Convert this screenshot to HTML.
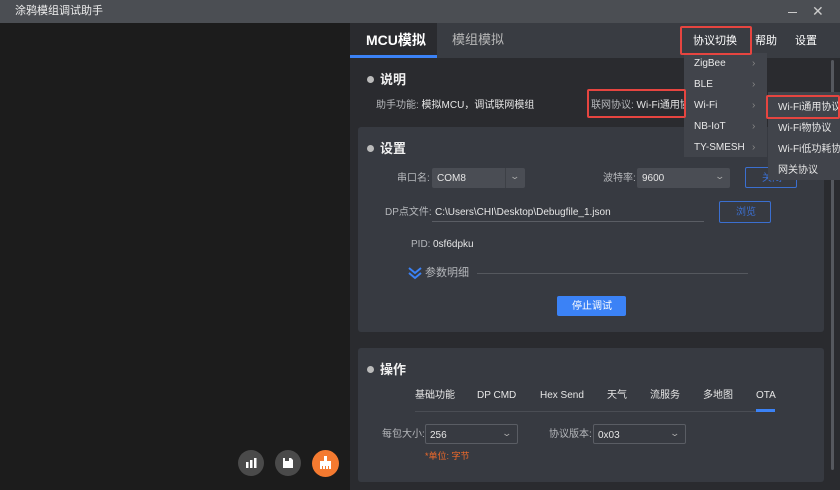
<!DOCTYPE html>
<html><head><meta charset="utf-8"><style>
*{margin:0;padding:0;box-sizing:border-box}
body{width:840px;height:490px;overflow:hidden;background:#1c1c1c;font-family:"Liberation Sans","Noto Sans CJK SC",sans-serif;color:#e6e6e6;font-size:10px;position:relative;line-height:1.5}
.a{position:absolute}
.t{white-space:nowrap}
.dot{width:7px;height:7px;border-radius:50%;background:#bbb}
.h{font-size:13px;font-weight:bold;color:#f0f0f0}
.lbl{color:#b5b7bb}
.sel{background:#4a4d54;height:20px;border-radius:2px}
.sel2{border:1px solid #5a5d64;height:20px;border-radius:2px}
.car{position:absolute;right:6px;top:2px;color:#aaa;font-size:9px;transform:scaleX(1.4)}
.mi{position:absolute;left:10px;font-size:10px;color:#e8e8e8}
.red{position:absolute;border:2px solid #e64540;border-radius:2px}
</style></head><body>
<div class="a" style="left:0;top:0;width:840px;height:23px;background:#4b4e53"></div>
<div class="a t" style="left:15px;top:3px;font-size:11px;color:#eee">涂鸦模组调试助手</div>
<div class="a" style="left:788px;top:12px;width:9px;height:1px;background:#ccc"></div>
<div class="a t" style="left:812px;top:1px;font-size:14px;color:#ccc">✕</div>

<div class="a" style="left:350px;top:23px;width:490px;height:467px;background:#2a2b2f"></div>
<div class="a" style="left:350px;top:23px;width:490px;height:35px;background:#393c42"></div>
<div class="a" style="left:350px;top:23px;width:87px;height:35px;background:#2a2b2f"></div>
<div class="a" style="left:350px;top:55px;width:87px;height:3px;background:#3b82f6"></div>
<div class="a t" style="left:366px;top:30px;font-size:14px;font-weight:bold;color:#fff">MCU模拟</div>
<div class="a t" style="left:452px;top:30px;font-size:13px;color:#b8b8b8">模组模拟</div>
<div class="a t" style="left:693px;top:33px;font-size:11px;color:#fff">协议切换</div>
<div class="a t" style="left:755px;top:33px;font-size:11px;color:#fff">帮助</div>
<div class="a t" style="left:795px;top:33px;font-size:11px;color:#fff">设置</div>
<div class="a" style="left:831px;top:60px;width:3px;height:410px;background:#55585e;border-radius:2px"></div>

<div class="a dot" style="left:367px;top:76px"></div>
<div class="a t h" style="left:380px;top:70px">说明</div>
<div class="a t" style="left:376px;top:98px"><span class="lbl">助手功能:</span> 模拟MCU，调试联网模组</div>
<div class="a t" style="left:591px;top:98px"><span class="lbl">联网协议:</span> Wi-Fi通用协议 <span style="color:#3b6fd0">使用说明</span></div>

<div class="a" style="left:358px;top:127px;width:466px;height:205px;background:#373a41;border-radius:3px"></div>
<div class="a dot" style="left:367px;top:145px"></div>
<div class="a t h" style="left:380px;top:139px">设置</div>
<div class="a t lbl" style="left:397px;top:171px">串口名:</div>
<div class="a sel" style="left:432px;top:168px;width:93px"><span class="a t" style="left:5px;top:3px">COM8</span><span class="a" style="left:73px;top:0;width:1px;height:20px;background:#3d4046"></span><span class="car">⌄</span></div>
<div class="a t lbl" style="left:603px;top:171px">波特率:</div>
<div class="a sel" style="left:637px;top:168px;width:93px"><span class="a t" style="left:5px;top:3px">9600</span><span class="car">⌄</span></div>
<div class="a" style="left:745px;top:167px;width:52px;height:21px;border:1px solid #3b6fd0;border-radius:2px"></div>
<div class="a t" style="left:762px;top:171px;color:#3b6fd0">关闭</div>
<div class="a t lbl" style="left:385px;top:205px">DP点文件:</div>
<div class="a t" style="left:435px;top:205px">C:\Users\CHI\Desktop\Debugfile_1.json</div>
<div class="a" style="left:432px;top:221px;width:272px;height:1px;background:#5a5d64"></div>
<div class="a" style="left:719px;top:201px;width:52px;height:22px;border:1px solid #3b6fd0;border-radius:2px"></div>
<div class="a t" style="left:736px;top:205px;color:#3b6fd0">浏览</div>
<div class="a t lbl" style="left:411px;top:237px">PID:</div>
<div class="a t" style="left:433px;top:237px">0sf6dpku</div>
<svg class="a" style="left:408px;top:267px" width="14" height="13"><path d="M1 1l6 5 6-5M1 6l6 5 6-5" stroke="#3b82f6" stroke-width="2" fill="none"/></svg>
<div class="a t lbl" style="left:425px;top:265px;font-size:11px">参数明细</div>
<div class="a" style="left:477px;top:273px;width:271px;height:1px;background:#55585e"></div>
<div class="a" style="left:557px;top:296px;width:69px;height:20px;background:#3b82f6;border-radius:2px"></div>
<div class="a t" style="left:572px;top:299px;color:#fff">停止调试</div>

<div class="a" style="left:358px;top:348px;width:466px;height:134px;background:#373a41;border-radius:3px"></div>
<div class="a dot" style="left:367px;top:366px"></div>
<div class="a t h" style="left:380px;top:360px">操作</div>
<div class="a t" style="left:415px;top:388px">基础功能</div>
<div class="a t" style="left:477px;top:388px">DP CMD</div>
<div class="a t" style="left:540px;top:388px">Hex Send</div>
<div class="a t" style="left:607px;top:388px">天气</div>
<div class="a t" style="left:650px;top:388px">流服务</div>
<div class="a t" style="left:703px;top:388px">多地图</div>
<div class="a t" style="left:756px;top:388px">OTA</div>
<div class="a" style="left:415px;top:411px;width:360px;height:1px;background:#4a4d54"></div>
<div class="a" style="left:756px;top:409px;width:19px;height:3px;background:#3b82f6"></div>
<div class="a t lbl" style="left:382px;top:427px">每包大小:</div>
<div class="a sel2" style="left:425px;top:424px;width:93px"><span class="a t" style="left:4px;top:3px">256</span><span class="car">⌄</span></div>
<div class="a t" style="left:425px;top:450px;color:#f06a2a;font-size:9px">*单位: 字节</div>
<div class="a t lbl" style="left:549px;top:427px">协议版本:</div>
<div class="a sel2" style="left:593px;top:424px;width:93px"><span class="a t" style="left:4px;top:3px">0x03</span><span class="car">⌄</span></div>

<div class="a" style="left:238px;top:450px;width:26px;height:26px;border-radius:50%;background:#4a4a4a"></div>
<svg class="a" style="left:244px;top:456px" width="14" height="14"><rect x="2" y="6" width="2.5" height="6" fill="#fff"/><rect x="6" y="4" width="2.5" height="8" fill="#fff"/><rect x="10" y="2" width="2.5" height="10" fill="#fff"/></svg>
<div class="a" style="left:275px;top:450px;width:26px;height:26px;border-radius:50%;background:#4a4a4a"></div>
<svg class="a" style="left:281px;top:456px" width="14" height="14"><path d="M2 2h8l2 2v8H2z" fill="#fff"/><rect x="4" y="2" width="4" height="3" fill="#4a4a4a"/></svg>
<div class="a" style="left:312px;top:450px;width:27px;height:27px;border-radius:50%;background:#f47a30"></div>
<svg class="a" style="left:318px;top:455px" width="15" height="16"><rect x="6" y="1" width="3" height="5" fill="#fff"/><rect x="2" y="6" width="11" height="3" fill="#fff"/><path d="M2 9v5h2v-3h1v3h2v-3h1v3h2v-3h1v3h2V9z" fill="#fff"/></svg>

<div class="a" style="left:684px;top:53px;width:83px;height:104px;background:#41444b"></div>
<div class="mi a t" style="left:694px;top:56px">ZigBee</div><div class="a t" style="left:752px;top:56px;color:#888">›</div>
<div class="mi a t" style="left:694px;top:77px">BLE</div><div class="a t" style="left:752px;top:77px;color:#888">›</div>
<div class="mi a t" style="left:694px;top:98px">Wi-Fi</div><div class="a t" style="left:752px;top:98px;color:#888">›</div>
<div class="mi a t" style="left:694px;top:119px">NB-IoT</div><div class="a t" style="left:752px;top:119px;color:#888">›</div>
<div class="mi a t" style="left:694px;top:140px">TY-SMESH</div><div class="a t" style="left:752px;top:140px;color:#888">›</div>
<div class="a" style="left:768px;top:92px;width:72px;height:88px;background:#41444b;overflow:hidden">
<div class="a t" style="left:10px;top:8px">Wi-Fi通用协议</div>
<div class="a t" style="left:10px;top:29px">Wi-Fi物协议</div>
<div class="a t" style="left:10px;top:50px">Wi-Fi低功耗协议</div>
<div class="a t" style="left:10px;top:71px">网关协议</div>
</div>
<div class="red" style="left:680px;top:26px;width:72px;height:29px"></div>
<div class="red" style="left:587px;top:89px;width:99px;height:29px"></div>
<div class="red" style="left:766px;top:95px;width:74px;height:24px"></div>
</body></html>
